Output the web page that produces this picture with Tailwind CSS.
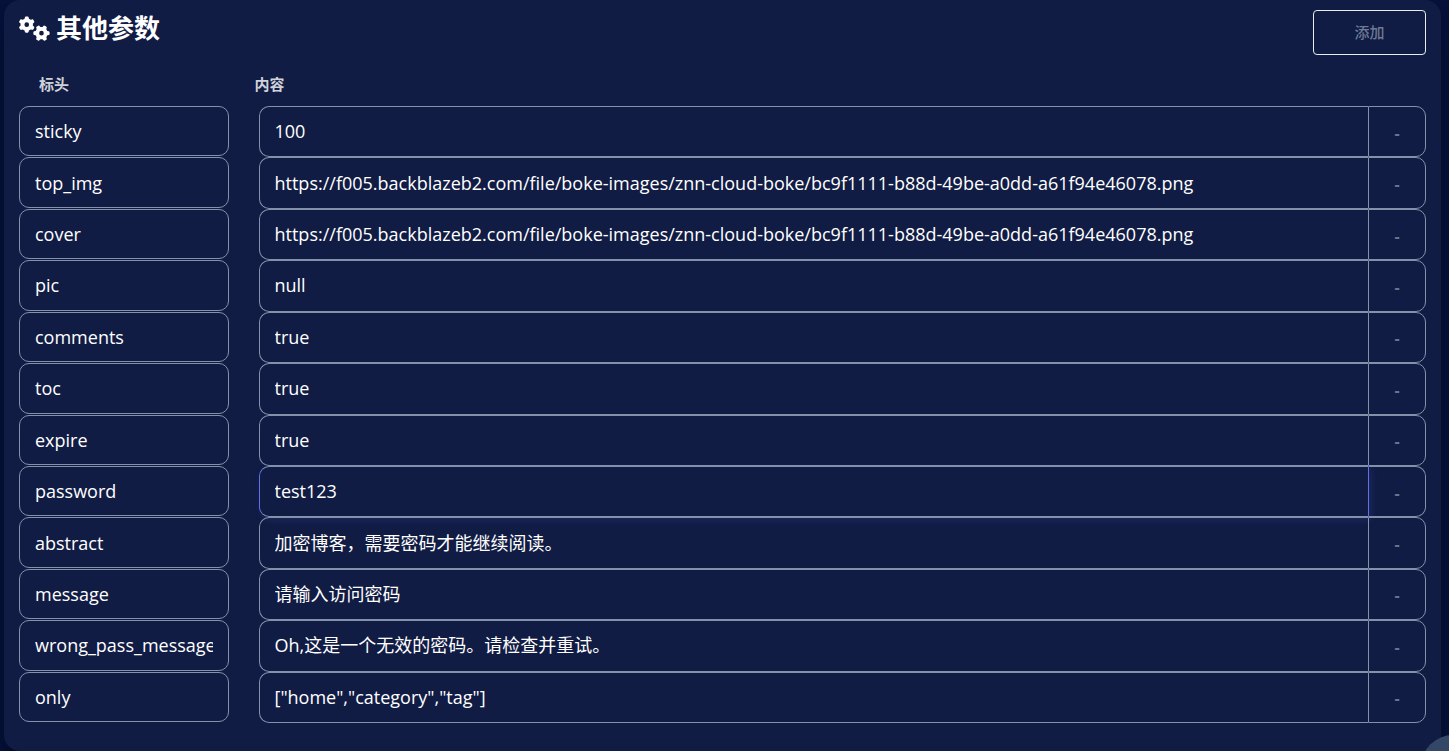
<!DOCTYPE html>
<html lang="zh-CN">
<head>
    <meta charset="UTF-8">
    <meta name="viewport" content="width=device-width, initial-scale=1.0">
    <title>其他参数</title>
    <script src="https://cdn.jsdelivr.net/npm/@tailwindcss/browser@4"></script>
</head>
<body class="bg-[#051139] overflow-x-hidden font-['Open_Sans','Noto_Sans_CJK_SC',sans-serif] text-white">
    <main class="min-h-screen flex flex-col ml-1 mr-2 pb-7 bg-[#111c44] rounded-2xl shadow-xl shadow-black/30">
        <!-- Title -->
        <div class="flex justify-between items-start px-[15px] pt-[10px]">
            <h1 class="flex items-center gap-1.5 text-[26px] leading-9 font-bold">
                <svg class="w-[31px] h-[25px]" viewBox="0 0 640 512" fill="currentColor" aria-hidden="true">
                    <path d="M308.500 135.300c7.100-6.300 9.900-16.200 6.200-25c-2.300-5.300-4.800-10.500-7.600-15.500L304 89.400c-3-5-6.300-9.900-9.800-14.600c-5.700-7.600-15.700-10.100-24.700-7.100l-28.200 9.300c-10.700-8.800-23-16-36.200-20.900L199 27.100c-1.900-9.300-9.100-16.700-18.500-17.800C173.900 8.400 167.200 8 160.400 8h-.7c-6.800 0-13.500 .4-20.100 1.200c-9.400 1.100-16.600 8.600-18.500 17.800L115 56.100c-13.300 5-25.500 12.100-36.200 20.900L50.500 67.800c-9-3-19-.5-24.700 7.100c-3.500 4.700-6.800 9.600-9.900 14.600l-3 5.300c-2.800 5-5.300 10.200-7.600 15.600c-3.700 8.700-.9 18.600 6.200 25l22.200 19.800C32.600 161.900 32 168.900 32 176s.6 14.100 1.700 20.900L11.500 216.700c-7.100 6.300-9.900 16.200-6.200 25c2.300 5.300 4.800 10.500 7.600 15.600l3 5.200c3 5.100 6.300 9.900 9.900 14.600c5.700 7.600 15.700 10.100 24.700 7.100l28.200-9.300c10.700 8.800 23 16 36.200 20.900l6.100 29.100c1.900 9.300 9.100 16.700 18.500 17.800c6.700 .8 13.500 1.200 20.400 1.200s13.700-.4 20.400-1.200c9.400-1.100 16.600-8.600 18.500-17.800l6.100-29.100c13.300-5 25.500-12.100 36.200-20.900l28.200 9.300c9 3 19 .5 24.700-7.100c3.500-4.700 6.800-9.500 9.800-14.600l3.100-5.400c2.800-5 5.300-10.200 7.600-15.500c3.700-8.700 .9-18.600-6.200-25l-22.200-19.800c1.100-6.800 1.700-13.800 1.700-20.900s-.6-14.100-1.700-20.900l22.200-19.800zM112 176a48 48 0 1 1 96 0 48 48 0 1 1 -96 0zM504.700 500.500c6.300 7.100 16.200 9.900 25 6.200c5.300-2.300 10.500-4.800 15.500-7.600l5.400-3.100c5-3 9.900-6.300 14.600-9.800c7.600-5.700 10.100-15.700 7.100-24.700l-9.300-28.200c8.800-10.700 16-23 20.900-36.200l29.100-6.100c9.300-1.900 16.700-9.100 17.800-18.500c.8-6.700 1.200-13.500 1.200-20.400s-.4-13.700-1.200-20.400c-1.100-9.400-8.600-16.600-17.800-18.500L583.900 307c-5-13.300-12.100-25.500-20.900-36.200l9.300-28.200c3-9 .5-19-7.100-24.700c-4.700-3.500-9.600-6.800-14.600-9.900l-5.300-3c-5-2.800-10.200-5.300-15.600-7.600c-8.700-3.700-18.600-.9-25 6.200l-19.800 22.200c-6.800-1.100-13.800-1.700-20.900-1.700s-14.100 .6-20.900 1.700l-19.800-22.200c-6.300-7.100-16.200-9.900-25-6.200c-5.300 2.300-10.500 4.800-15.600 7.600l-5.200 3c-5.100 3-9.900 6.300-14.600 9.900c-7.600 5.700-10.100 15.700-7.100 24.700l9.300 28.200c-8.800 10.700-16 23-20.900 36.200L315.100 313c-9.300 1.900-16.700 9.100-17.800 18.500c-.8 6.700-1.200 13.500-1.200 20.400s.4 13.700 1.200 20.400c1.100 9.400 8.600 16.600 17.800 18.500l29.100 6.100c5 13.300 12.100 25.500 20.900 36.200l-9.300 28.200c-3 9-.5 19 7.100 24.700c4.700 3.500 9.500 6.800 14.600 9.800l5.400 3.100c5 2.800 10.200 5.300 15.500 7.600c8.700 3.700 18.600 .9 25-6.200l19.800-22.200c6.800 1.100 13.800 1.700 20.900 1.700s14.100-.6 20.900-1.700l19.800 22.200zM464 304a48 48 0 1 1 0 96 48 48 0 1 1 0-96z"/>
                </svg>
                其他参数
            </h1>
            <button type="button" class="w-[113px] h-[45px] rounded border border-[#e9ecef] text-[15px] font-medium text-[#6c7a94]">添加</button>
        </div>

        <!-- Column names -->
        <div class="grid grid-cols-12 pt-[19px] pb-3 text-[15px] leading-5 font-bold text-[#cfd2da]">
            <div id="col-key" class="col-span-2 pl-[35px]">标头</div>
            <div id="col-value" class="col-span-10 pl-[11px]">内容</div>
        </div>

        <form id="params" class="flex-1 grid auto-rows-fr text-[18px]"></form>
    </main>

    <button type="button" aria-label="设置" class="fixed -bottom-12 -right-9 size-16 rounded-full bg-[#344767]"></button>

    <script>
        const params = [
            ['sticky', '100'],
            ['top_img', 'https://f005.backblazeb2.com/file/boke-images/znn-cloud-boke/bc9f1111-b88d-49be-a0dd-a61f94e46078.png'],
            ['cover', 'https://f005.backblazeb2.com/file/boke-images/znn-cloud-boke/bc9f1111-b88d-49be-a0dd-a61f94e46078.png'],
            ['pic', 'null'],
            ['comments', 'true'],
            ['toc', 'true'],
            ['expire', 'true'],
            ['password', 'test123'],
            ['abstract', '加密博客，需要密码才能继续阅读。'],
            ['message', '请输入访问密码'],
            ['wrong_pass_message', 'Oh,这是一个无效的密码。请检查并重试。'],
            ['only', '["home","category","tag"]']
        ];
        const active = 'password';

        const form = document.getElementById('params');
        params.forEach(([key, value]) => {
            const row = document.createElement('div');
            row.className = 'grid grid-cols-12';
            row.innerHTML = `
                <div class="col-span-2 px-[15px] pb-px">
                    <input type="text" aria-labelledby="col-key" class="key w-full h-full min-h-10 px-[15px] rounded-[10px] border border-[#8392ab] outline-none">
                </div>
                <div class="col-span-10 px-[15px] flex">
                    <input type="text" aria-labelledby="col-value" class="value flex-1 min-w-0 min-h-10 px-[15px] rounded-l-[10px] border border-r-0 border-[#8392ab] outline-none">
                    <button type="button" aria-label="删除" class="remove w-[58px] pt-0.5 rounded-r-[10px] border border-[#8392ab] text-[16px] font-bold text-[#67748e]">-</button>
                </div>`;
            row.querySelector('.key').value = key;
            row.querySelector('.value').value = value;
            if (key === active) {
                row.querySelector('.value').classList.add('border-l-[#5e72e4]', 'shadow-[3px_3px_9px_rgba(94,114,228,0.15)]');
                row.querySelector('.remove').classList.add('border-l-[#5e72e4]');
            }
            row.querySelector('.remove').addEventListener('click', () => row.remove());
            form.appendChild(row);
        });
    </script>
</body>
</html>
